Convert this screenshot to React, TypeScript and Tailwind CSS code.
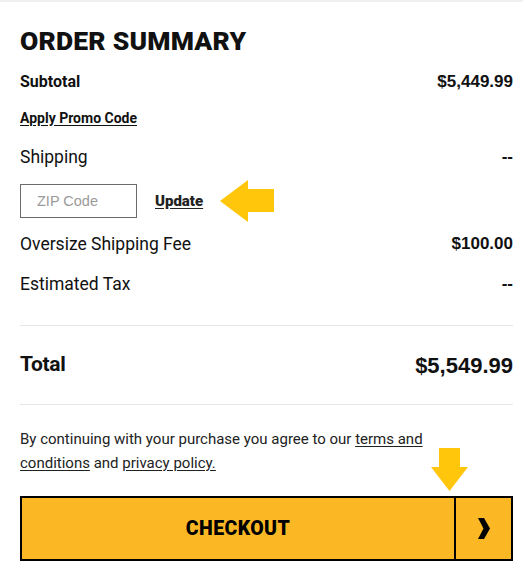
import React from "react";

export default function App() {
  return (
    <div className="w-[523px] h-[576px] bg-white text-[#111] font-['Roboto','Liberation_Sans',sans-serif] overflow-hidden">
      <div className="h-[2px] bg-[#f0f0f0]" />
      <div className="pl-5 pr-[10px] flex flex-col">
        <div className="mt-[19px] h-[40px] flex items-center">
          <h1 className="text-[26.5px] font-black tracking-[0.2px] leading-none uppercase">Order Summary</h1>
        </div>

        <div className="mt-[9px] h-[24px] flex items-center justify-between">
          <span className="text-[16px] font-bold">Subtotal</span>
          <span className="font-['Liberation_Sans',Arial,sans-serif] font-bold text-[17px]">$5,449.99</span>
        </div>

        <div className="mt-[12px] h-[24px] flex items-center">
          <a className="text-[14px] font-bold underline underline-offset-2">Apply Promo Code</a>
        </div>

        <div className="mt-[15px] h-[24px] flex items-center justify-between">
          <span className="text-[17.5px]">Shipping</span>
          <span className="font-['Liberation_Sans',Arial,sans-serif] font-bold text-[17px]">--</span>
        </div>

        <div className="mt-[15px] h-[34px] flex items-center">
          <input
            placeholder="ZIP Code"
            className="w-[117px] h-[34px] border border-[#6b6b6b] pl-[16px] text-[14.5px] font-['Liberation_Sans',Arial,sans-serif] placeholder:text-[#9a9a9a] outline-none"
          />
          <a className="ml-[18px] text-[15px] font-black underline underline-offset-2 text-[#222]">Update</a>
          <svg className="ml-[17px]" width="54" height="42" viewBox="0 0 54 42">
            <polygon points="0,21 28,0 28,9 54,9 54,32 28,32 28,42" fill="#ffc60b" />
          </svg>
        </div>

        <div className="mt-[14px] h-[24px] flex items-center justify-between">
          <span className="text-[17.5px]">Oversize Shipping Fee</span>
          <span className="font-['Liberation_Sans',Arial,sans-serif] font-bold text-[17px]">$100.00</span>
        </div>

        <div className="mt-[16px] h-[24px] flex items-center justify-between">
          <span className="text-[17.5px]">Estimated Tax</span>
          <span className="font-['Liberation_Sans',Arial,sans-serif] font-bold text-[17px]">--</span>
        </div>

        <div className="mt-[29px] h-px bg-[#e6e6e6]" />

        <div className="mt-[24px] h-[30px] flex items-center justify-between">
          <span className="text-[21px] font-bold tracking-[-0.3px]">Total</span>
          <span className="font-['Liberation_Sans',Arial,sans-serif] font-bold text-[22px]">$5,549.99</span>
        </div>

        <div className="mt-[24px] h-px bg-[#e6e6e6]" />

        <p className="mt-[22px] text-[15px] leading-[24px] text-[#222]">
          By continuing with your purchase you agree to our <a className="underline underline-offset-2">terms and</a>
          <br />
          <a className="underline underline-offset-2">conditions</a> and <a className="underline underline-offset-2">privacy policy.</a>
        </p>

        <div className="relative mt-[21px]">
          <svg className="absolute left-[411px] top-[-48px]" width="37" height="43" viewBox="0 0 37 43">
            <polygon points="8,0 29,0 29,19 37,19 18.5,43 0,19 8,19" fill="#ffc60b" />
          </svg>
          <button className="w-full h-[65px] flex border-2 border-black bg-[#fbb824]">
            <span className="flex-1 h-full flex items-center justify-center text-[19.5px] font-black tracking-[0.4px] text-black">
              CHECKOUT
            </span>
            <span className="w-[57px] h-full border-l-2 border-black flex items-center justify-center">
              <svg width="12" height="21" viewBox="0 0 12 21">
                <polygon points="0,0 6,0 12,10.5 6,21 0,21 5.5,10.5" fill="#000" />
              </svg>
            </span>
          </button>
        </div>
      </div>
    </div>
  );
}
